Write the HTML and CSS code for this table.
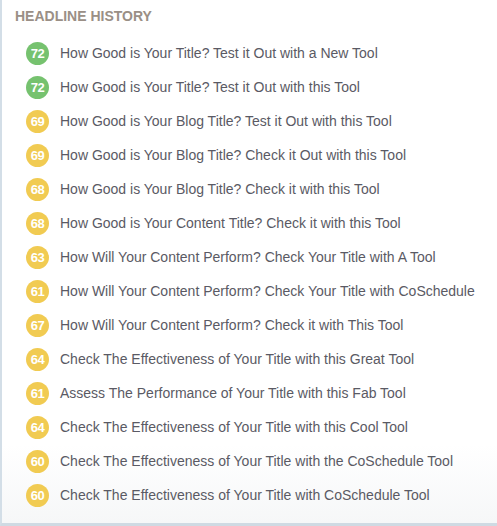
FILE: index.html
```html
<!DOCTYPE html>
<html>
<head>
<meta charset="utf-8">
<link rel="stylesheet" href="styles.css">
</head>
<body>
<div class="panel">
  <h2 class="title">HEADLINE HISTORY</h2>
  <ul class="list">
    <li class="row"><span class="score green">72</span><span class="text">How Good is Your Title? Test it Out with a New Tool</span></li>
    <li class="row"><span class="score green">72</span><span class="text">How Good is Your Title? Test it Out with this Tool</span></li>
    <li class="row"><span class="score yellow">69</span><span class="text">How Good is Your Blog Title? Test it Out with this Tool</span></li>
    <li class="row"><span class="score yellow">69</span><span class="text">How Good is Your Blog Title? Check it Out with this Tool</span></li>
    <li class="row"><span class="score yellow">68</span><span class="text">How Good is Your Blog Title? Check it with this Tool</span></li>
    <li class="row"><span class="score yellow">68</span><span class="text">How Good is Your Content Title? Check it with this Tool</span></li>
    <li class="row"><span class="score yellow">63</span><span class="text">How Will Your Content Perform? Check Your Title with A Tool</span></li>
    <li class="row"><span class="score yellow">61</span><span class="text">How Will Your Content Perform? Check Your Title with CoSchedule</span></li>
    <li class="row"><span class="score yellow">67</span><span class="text">How Will Your Content Perform? Check it with This Tool</span></li>
    <li class="row"><span class="score yellow">64</span><span class="text">Check The Effectiveness of Your Title with this Great Tool</span></li>
    <li class="row"><span class="score yellow">61</span><span class="text">Assess The Performance of Your Title with this Fab Tool</span></li>
    <li class="row"><span class="score yellow">64</span><span class="text">Check The Effectiveness of Your Title with this Cool Tool</span></li>
    <li class="row"><span class="score yellow">60</span><span class="text">Check The Effectiveness of Your Title with the CoSchedule Tool</span></li>
    <li class="row"><span class="score yellow">60</span><span class="text">Check The Effectiveness of Your Title with CoSchedule Tool</span></li>
  </ul>
</div>
</body>
</html>
```

FILE: styles.css
```css
html, body {
  margin: 0;
  padding: 0;
  background: #ffffff;
}
body {
  font-family: "Liberation Sans", Arial, Helvetica, sans-serif;
}
.panel {
  box-sizing: border-box;
  width: 497px;
  height: 526px;
  border-left: 2px solid #d3dee7;
  border-bottom: 3px solid #cfdae3;
  background: linear-gradient(to bottom, #ffffff 0%, #ffffff 85%, #f6f7f8 100%);
  padding: 8px 0 0 13px;
}
.title {
  margin: 0;
  font-size: 14px;
  line-height: 16px;
  font-weight: bold;
  color: #9a8f86;
}
.list {
  list-style: none;
  margin: 12px 0 0 0;
  padding: 0;
}
.row {
  display: flex;
  align-items: center;
  height: 34px;
}
.score {
  flex: none;
  width: 23px;
  height: 23px;
  margin-left: 11px;
  border-radius: 50%;
  display: flex;
  align-items: center;
  justify-content: center;
  color: #ffffff;
  font-weight: bold;
  font-size: 13px;
  letter-spacing: -0.6px;
}
.green { background: #76c26f; }
.yellow { background: #f1cb52; }
.text {
  margin-left: 11px;
  font-size: 14px;
  color: #5a5a64;
  white-space: nowrap;
}
```
